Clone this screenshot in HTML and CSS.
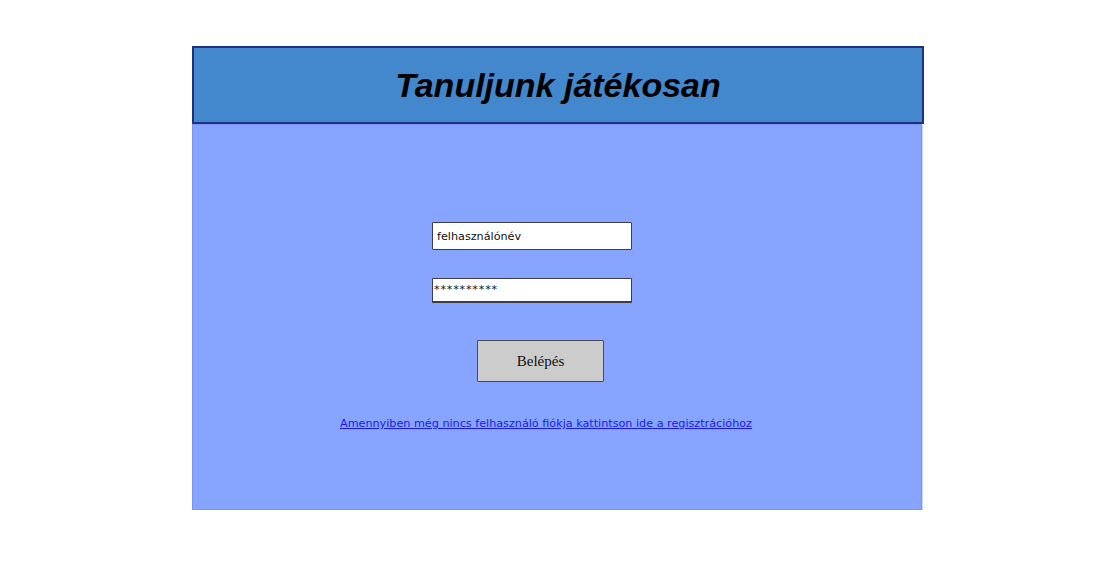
FILE: index.html
```html
<!DOCTYPE html>
<html lang="hu">
<head>
<meta charset="utf-8">
<title>Tanuljunk játékosan</title>
<link rel="stylesheet" href="styles.css">
</head>
<body>
<div class="page">
  <header class="header">
    <h1 class="title">Tanuljunk játékosan</h1>
  </header>
  <main class="panel">
    <div class="field field-user">felhasználónév</div>
    <div class="field field-pass">**********</div>
    <button class="btn" type="button">Belépés</button>
    <a class="reg-link" href="#">Amennyiben még nincs felhasználó fiókja kattintson ide a regisztrációhoz</a>
  </main>
</div>
</body>
</html>
```
FILE: styles.css
```css
* { box-sizing: border-box; }
html, body { margin: 0; padding: 0; background: #ffffff; }
.page {
  width: 732px;
  margin: 46px 0 0 192px;
  display: flex;
  flex-direction: column;
}
.header {
  height: 78px;
  background: #4387cc;
  border: 2px solid #1f3082;
  display: flex;
  align-items: center;
  justify-content: center;
}
.title {
  margin: 0;
  font-family: "Liberation Sans", Arial, sans-serif;
  font-weight: bold;
  font-style: italic;
  font-size: 34px;
  color: #000;
}
.panel {
  width: 730px;
  height: 386px;
  background: #87a4ff;
  border: 1px solid #7a95f2;
  box-shadow: 1px 1px 0 #c9d6ff;
  display: flex;
  flex-direction: column;
  align-items: flex-start;
}
.field {
  width: 200px;
  background: #fff;
  border: 1px solid #3d3d48;
  border-radius: 1px;
  font-family: "DejaVu Sans", sans-serif;
  font-size: 11.2px;
  color: #111;
  padding-left: 4px;
  display: flex;
  align-items: center;
  margin-left: 239px;
}
.field-user { height: 28px; margin-top: 97px; }
.field-pass {
  height: 25px;
  margin-top: 28px;
  padding-left: 1px;
  padding-bottom: 2px;
  border-bottom-width: 2px;
  letter-spacing: 0.8px;
}
.btn {
  margin: 37px 0 0 284px;
  width: 127px;
  height: 42px;
  background: #cccccc;
  border: 1px solid #4a4a58;
  border-radius: 1px;
  font-family: "Liberation Serif", "Times New Roman", serif;
  font-size: 15px;
  color: #111;
  padding: 0 0 0 0;
}
.reg-link {
  margin: 33px 0 0 147px;
  font-family: "DejaVu Sans", sans-serif;
  font-size: 11.2px;
  line-height: 18px;
  color: #1a1aee;
  text-decoration: underline;
}
```
